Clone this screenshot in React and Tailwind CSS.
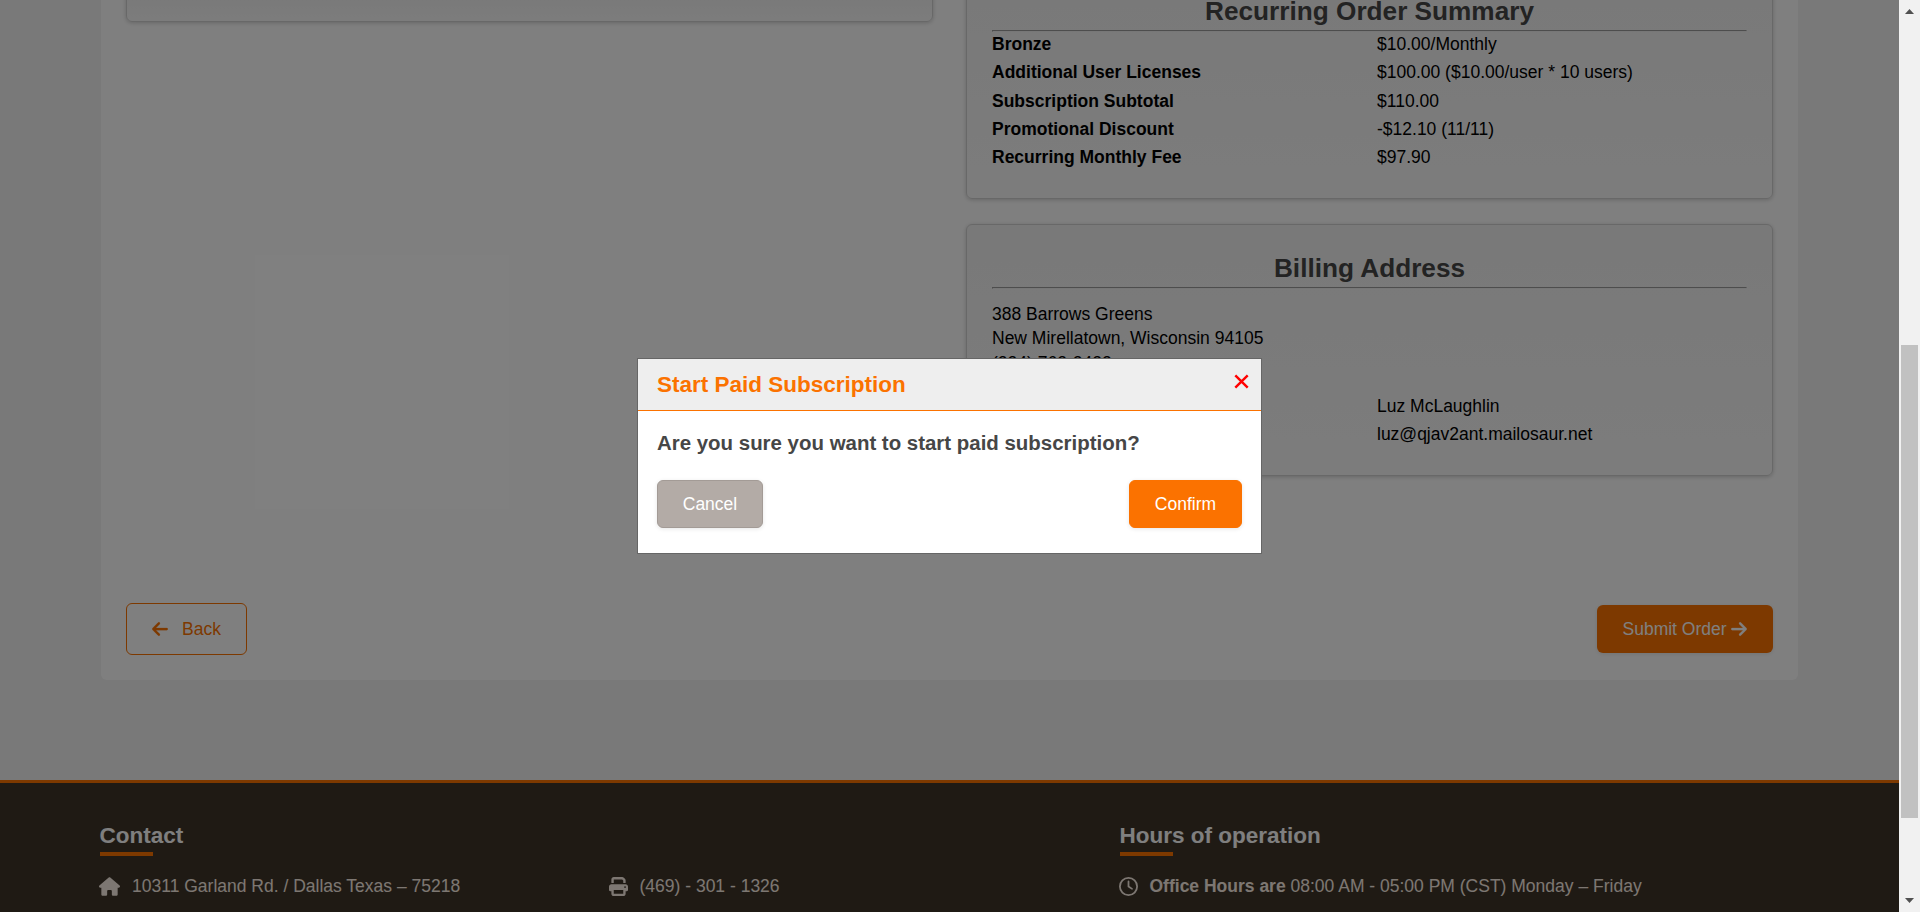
import { FaArrowLeft, FaArrowRight, FaHouse, FaPrint, FaRegClock } from "react-icons/fa6";

const summaryRows = [
  ["Bronze", "$10.00/Monthly"],
  ["Additional User Licenses", "$100.00 ($10.00/user * 10 users)"],
  ["Subscription Subtotal", "$110.00"],
  ["Promotional Discount", "-$12.10 (11/11)"],
  ["Recurring Monthly Fee", "$97.90"],
];

function Card({ className, children }) {
  return (
    <section
      className={`rounded-md border border-[#d0d0d0] bg-linear-to-b from-[#f2f2f2] to-[#f9f9f9] px-[25px] shadow-[0_1px_4px_rgba(0,0,0,0.2)] ${className}`}
    >
      {children}
    </section>
  );
}

function CardTitle({ children }) {
  return (
    <>
      <h2 className="text-center text-[26.2px] leading-[30px] font-bold text-[#464646]">
        {children}
      </h2>
      <hr className="mt-1 h-0.5 border-x border-y border-t-[#9a9a9a] border-r-[#eeeeee] border-b-[#eeeeee] border-l-[#9a9a9a]" />
    </>
  );
}

function FooterTitle({ children }) {
  return (
    <div>
      <h3 className="text-[22.5px] leading-[26px] font-bold text-white">{children}</h3>
      <div className="mt-[3px] h-1 w-[53px] bg-[#fb7200]" />
    </div>
  );
}

function Scrollbar() {
  return (
    <div className="flex w-[21px] shrink-0 flex-col items-center bg-[#f1f1f1]">
      <svg className="h-[21px] w-[21px]" viewBox="0 0 21 21">
        <path d="M6 14 L10.5 9 L15 14 Z" fill="#505050" />
      </svg>
      <div className="mt-[324px] h-[473px] w-[17px] bg-[#c1c1c1]" />
      <div className="flex-1" />
      <svg className="h-[21px] w-[21px]" viewBox="0 0 21 21">
        <path d="M6 7 L10.5 12 L15 7 Z" fill="#505050" />
      </svg>
    </div>
  );
}

function Modal() {
  return (
    <div className="w-[625px] border border-[#666666] bg-white">
      <header className="flex h-[52px] items-start justify-between border-b border-[#fb7200] bg-[#eeeeee] pr-[12.5px] pl-[19px]">
        <h2 className="pt-3 text-[22.5px] leading-[28px] font-bold text-[#fb7200]">
          Start Paid Subscription
        </h2>
        <button className="pt-[14.5px]" aria-label="Close">
          <svg className="h-[15px] w-[15px]" viewBox="0 0 15 15">
            <path d="M1.3 1.3 L13.7 13.7 M13.7 1.3 L1.3 13.7" stroke="#ff0000" strokeWidth="2.4" />
          </svg>
        </button>
      </header>
      <div className="px-[19px] pt-[19px] pb-[25px]">
        <p className="text-[20.45px] leading-[26px] font-bold text-[#464646]">
          Are you sure you want to start paid subscription?
        </p>
        <div className="mt-6 flex justify-between">
          <button className="h-12 w-[106px] rounded-md border border-[#a39b96] bg-[#b3aba6] text-white shadow-[0_1px_4px_rgba(0,0,0,0.1)]">
            Cancel
          </button>
          <button className="h-12 w-[113px] rounded-md border border-[#fb7200] bg-[#fb7200] text-white shadow-[0_1px_4px_rgba(0,0,0,0.1)]">
            Confirm
          </button>
        </div>
      </div>
    </div>
  );
}

export default function App() {
  return (
    <div className="flex h-[912px] w-[1920px] overflow-hidden font-['Liberation_Sans',Arial,sans-serif] text-[17.5px] leading-6 text-black">
      <div className="relative flex w-[1899px] flex-col overflow-hidden bg-[#f3f3f3]">
        <main className="mx-[101px] flex h-[680px] w-[1697px] flex-col rounded-b-md bg-white px-[25px]">
          <div className="flex h-[476px] items-start gap-[33px]">
            <Card className="-mt-2 h-[30px] w-[807px]" />
            <div className="w-[807px]">
              <Card className="-mt-[30px] h-[229px] pt-[25px]">
                <CardTitle>Recurring Order Summary</CardTitle>
                <dl className="flex flex-col gap-[4.3px]">
                  {summaryRows.map(([label, value]) => (
                    <div key={label} className="flex">
                      <dt className="w-[385px] font-bold">{label}</dt>
                      <dd>{value}</dd>
                    </div>
                  ))}
                </dl>
              </Card>
              <Card className="mt-[25px] h-[252px] pt-[28px]">
                <CardTitle>Billing Address</CardTitle>
                <address className="mt-[13px] leading-[24.3px] not-italic">
                  388 Barrows Greens
                  <br />
                  New Mirellatown, Wisconsin 94105
                  <br />
                  (224) 762-2422
                </address>
                <div className="mt-[19px] flex flex-col gap-1 pl-[385px]">
                  <span>Luz McLaughlin</span>
                  <span>luz@qjav2ant.mailosaur.net</span>
                </div>
              </Card>
            </div>
          </div>
          <div className="mt-[127px] flex items-center justify-between">
            <button className="flex h-[52px] w-[121px] items-center rounded-md border border-[#fb7200] pl-[25px] text-[#fb7200]">
              <FaArrowLeft className="mr-[14px] h-[18px] w-[16px]" stroke="currentColor" strokeWidth="6" />
              Back
            </button>
            <button className="flex h-12 w-[176px] items-center justify-between rounded-md bg-[#fb7200] pr-[26px] pl-[25.5px] text-white shadow-[0_1px_4px_rgba(0,0,0,0.1)]">
              Submit Order
              <FaArrowRight className="h-[18px] w-[16px]" stroke="currentColor" strokeWidth="6" />
            </button>
          </div>
        </main>
        <footer className="mt-[100px] flex-1 border-t-[3px] border-[#fb7200] bg-[#3e3428] px-[99.5px] pt-10 text-[#faeee4]">
          <div className="grid grid-cols-[510px_510px_1fr]">
            <FooterTitle>Contact</FooterTitle>
            <div />
            <FooterTitle>Hours of operation</FooterTitle>
            <div className="mt-[18px] flex items-center">
              <FaHouse className="mr-[12.5px] -ml-px h-[19px] w-[21px]" />
              10311 Garland Rd. / Dallas Texas – 75218
            </div>
            <div className="mt-[18px] flex items-center">
              <FaPrint className="mr-[12px] -ml-px h-[19px] w-[19px]" />
              (469) - 301 - 1326
            </div>
            <div className="mt-[18px] flex items-center">
              <FaRegClock className="mr-[12px] -ml-px h-[19px] w-[19px]" />
              <span>
                <b>Office Hours are</b> 08:00 AM - 05:00 PM (CST) Monday – Friday
              </span>
            </div>
          </div>
        </footer>
        <div className="absolute inset-0 flex items-center justify-center bg-black/50">
          <Modal />
        </div>
      </div>
      <Scrollbar />
    </div>
  );
}
